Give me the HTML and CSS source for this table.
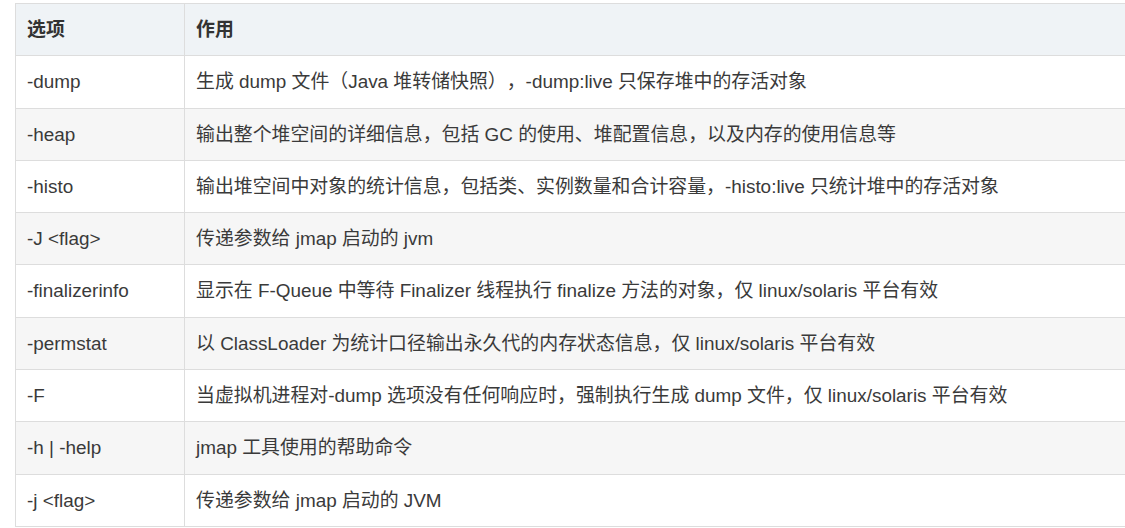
FILE: index.html
```html
<!DOCTYPE html>
<html lang="zh-CN">
<head>
    <meta charset="UTF-8">
    <meta name="viewport" content="width=device-width, initial-scale=1.0">
    <title>jmap 选项</title>
    <link rel="stylesheet" href="styles.css">
</head>
<body>
    <table class="opts">
        <thead>
            <tr>
                <th class="col-opt">选项</th>
                <th>作用</th>
            </tr>
        </thead>
        <tbody>
            <tr><td>-dump</td><td>生成 dump 文件（Java 堆转储快照），-dump:live 只保存堆中的存活对象</td></tr>
            <tr><td>-heap</td><td>输出整个堆空间的详细信息，包括 GC 的使用、堆配置信息，以及内存的使用信息等</td></tr>
            <tr><td>-histo</td><td>输出堆空间中对象的统计信息，包括类、实例数量和合计容量，-histo:live 只统计堆中的存活对象</td></tr>
            <tr><td>-J &lt;flag&gt;</td><td>传递参数给 jmap 启动的 jvm</td></tr>
            <tr><td>-finalizerinfo</td><td>显示在 F-Queue 中等待 Finalizer 线程执行 finalize 方法的对象，仅 linux/solaris 平台有效</td></tr>
            <tr><td>-permstat</td><td>以 ClassLoader 为统计口径输出永久代的内存状态信息，仅 linux/solaris 平台有效</td></tr>
            <tr><td>-F</td><td>当虚拟机进程对-dump 选项没有任何响应时，强制执行生成 dump 文件，仅 linux/solaris 平台有效</td></tr>
            <tr><td>-h | -help</td><td>jmap 工具使用的帮助命令</td></tr>
            <tr><td>-j &lt;flag&gt;</td><td>传递参数给 jmap 启动的 JVM</td></tr>
        </tbody>
    </table>
</body>
</html>
```

FILE: styles.css
```css
html {
    overflow: hidden;
}

body {
    margin: 0;
    padding: 3px 0 0 15px;
    background: #fff;
    font-family: "Liberation Sans", "Noto Sans CJK SC", sans-serif;
    font-size: 18.9px;
    color: #3a3a3a;
    text-spacing-trim: space-all;
}

.opts {
    border-collapse: collapse;
    width: 1130px;
}

.opts th, .opts td {
    border: 1px solid #ddd;
    padding: 13px 11px;
    line-height: 25.3px;
    text-align: left;
    white-space: nowrap;
}

.opts th {
    background-color: #eff3f6;
    font-weight: bold;
    color: #333;
}

.opts .col-opt {
    width: 146px;
}

.opts tbody tr:nth-child(even) {
    background-color: #f6f6f6;
}
```
